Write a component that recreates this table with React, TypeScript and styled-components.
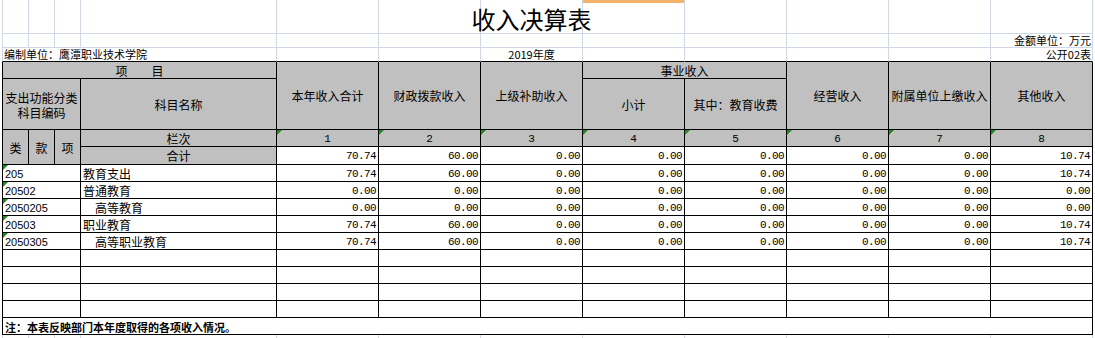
import React from "react";
import styled, { createGlobalStyle, css } from "styled-components";

const GRID = "#d0d7e5";
const LINE = "#000";
const HEAD = "#c0c0c0";
const CJK = `"Noto Sans CJK SC", "Liberation Sans", sans-serif`;
const MONO = `"Liberation Mono", monospace`;
const SANS = `"Liberation Sans", Arial, sans-serif`;

type Align = "left" | "center" | "right";
type CellProps = {
  $cols?: number;
  $rows?: number;
  $first?: boolean;
  $align?: Align;
  $mark?: boolean;
};

const justify: Record<Align, string> = { left: "flex-start", center: "center", right: "flex-end" };

const GlobalStyle = createGlobalStyle`
  html, body { margin: 0; padding: 0; background: #fff; }
  body { font-family: ${CJK}; color: #000; overflow: hidden; }
`;

const base = css<CellProps>`
  box-sizing: border-box;
  position: relative;
  display: flex;
  align-items: center;
  justify-content: ${(p) => justify[p.$align ?? "center"]};
  grid-column: span ${(p) => p.$cols ?? 1};
  grid-row: span ${(p) => p.$rows ?? 1};
  min-width: 0;
  white-space: nowrap;
`;

// little green "number stored as text" flag excel draws in the corner
const flag = css`
  &::before {
    content: "";
    position: absolute;
    top: 0;
    left: 0;
    border-top: 5px solid #1d8a1d;
    border-right: 5px solid transparent;
  }
`;

const Page = styled.div`
  height: 338px;
  padding-left: 2px;
`;

const Sheet = styled.div`
  display: grid;
  grid-template-columns: 27px 26px 26px 196px repeat(8, 102px);
  grid-template-rows: 34px 14px 14px 17px 51px 17px 18px repeat(10, 17px) 1fr;
  height: 100%;
`;

// plain worksheet cell outside the printed table
const Blank = styled.div<CellProps & { $edge?: boolean; $selected?: boolean }>`
  ${base};
  align-items: flex-end;
  padding: 0 1px;
  border-right: 1px solid ${GRID};
  border-bottom: 1px solid ${(p) => (p.$edge ? LINE : GRID)};
  border-left: ${(p) => (p.$first ? `1px solid ${GRID}` : "none")};
  ${(p) => p.$selected && css`box-shadow: inset 0 3px 0 #f6b36b;`}
  font-size: 11px;
  line-height: 13px;
`;

const Stub = styled.div<CellProps>`
  ${base};
  border-right: 1px solid ${GRID};
  border-left: ${(p) => (p.$first ? `1px solid ${GRID}` : "none")};
`;

const Title = styled.span`
  font-size: 24px;
  line-height: 26px;
  padding-bottom: 1px;
`;

const Head = styled.div<CellProps & { $mono?: boolean }>`
  ${base};
  background: ${HEAD};
  border-right: 1px solid ${LINE};
  border-bottom: 1px solid ${LINE};
  border-left: ${(p) => (p.$first ? `1px solid ${LINE}` : "none")};
  font-family: ${(p) => (p.$mono ? MONO : CJK)};
  font-size: ${(p) => (p.$mono ? 11 : 12)}px;
  line-height: 14px;
  padding-top: 1px;
  ${(p) => p.$mark && flag};
`;

const Label = styled.span`
  display: flex;
  flex-direction: column;
  align-items: center;
  line-height: 15px;
`;

type Kind = "num" | "code" | "text";

const Data = styled.div<CellProps & { $kind?: Kind; $indent?: boolean }>`
  ${base};
  background: #fff;
  border-right: 1px solid ${LINE};
  border-bottom: 1px solid ${LINE};
  border-left: ${(p) => (p.$first ? `1px solid ${LINE}` : "none")};
  justify-content: ${(p) => (p.$kind === "num" ? "flex-end" : "flex-start")};
  padding: 1px 2px 0 ${(p) => (p.$indent ? 14 : 2)}px;
  font-family: ${(p) => (p.$kind === "num" ? MONO : p.$kind === "code" ? SANS : CJK)};
  font-size: ${(p) => (p.$kind === "text" ? 12 : 11)}px;
  letter-spacing: ${(p) => (p.$kind === "num" ? "-0.6px" : "0")};
  line-height: 14px;
  ${(p) => p.$mark && flag};
`;

const Note = styled.div`
  ${base};
  grid-column: span 12;
  justify-content: flex-start;
  padding: 2px 0 0 2px;
  border: 1px solid ${LINE};
  border-top: none;
  font-size: 11px;
  font-weight: bold;
`;

const totals = ["70.74", "60.00", "0.00", "0.00", "0.00", "0.00", "0.00", "10.74"];
const zeros = Array(8).fill("0.00");

const items = [
  { code: "205", name: "教育支出", values: totals },
  { code: "20502", name: "普通教育", values: zeros },
  { code: "2050205", name: "高等教育", indent: true, values: zeros },
  { code: "20503", name: "职业教育", values: totals },
  { code: "2050305", name: "高等职业教育", indent: true, values: totals },
];

const cols = Array.from({ length: 12 }, (_, i) => i);
const numbers = Array.from({ length: 8 }, (_, i) => i + 1);

export default function App() {
  return (
    <Page>
      <GlobalStyle />
      <Sheet>
        {cols.map((i) => (
          <Blank key={"r1" + i} $first={i === 0} $selected={i === 7}>
            {i === 6 && <Title>收入决算表</Title>}
          </Blank>
        ))}
        {cols.map((i) => (
          <Blank key={"r2" + i} $first={i === 0} $align="right">
            {i === 11 && "金额单位：万元"}
          </Blank>
        ))}
        <Blank $first $cols={4} $edge $align="left">
          编制单位：鹰潭职业技术学院
        </Blank>
        {cols.slice(4).map((i) => (
          <Blank key={"r3" + i} $edge $align={i === 11 ? "right" : "center"}>
            {i === 6 && "2019年度"}
            {i === 11 && "公开02表"}
          </Blank>
        ))}

        <Head $first $cols={4}>项　　目</Head>
        <Head $rows={2}>本年收入合计</Head>
        <Head $rows={2}>财政拨款收入</Head>
        <Head $rows={2}>上级补助收入</Head>
        <Head $cols={2}>事业收入</Head>
        <Head $rows={2}>经营收入</Head>
        <Head $rows={2}>附属单位上缴收入</Head>
        <Head $rows={2}>其他收入</Head>

        <Head $first $cols={3}>
          <Label>
            <span>支出功能分类</span>
            <span>科目编码</span>
          </Label>
        </Head>
        <Head>科目名称</Head>
        <Head>小计</Head>
        <Head>其中：教育收费</Head>

        <Head $first $rows={2}>类</Head>
        <Head $rows={2}>款</Head>
        <Head $rows={2}>项</Head>
        <Head>栏次</Head>
        {numbers.map((n) => (
          <Head key={"n" + n} $mono $mark>
            {n}
          </Head>
        ))}

        <Head>合计</Head>
        {totals.map((v, i) => (
          <Data key={"t" + i} $kind="num">
            {v}
          </Data>
        ))}

        {items.map((row) => (
          <React.Fragment key={row.code}>
            <Data $first $cols={3} $kind="code" $mark>
              {row.code}
            </Data>
            <Data $kind="text" $indent={row.indent}>
              {row.name}
            </Data>
            {row.values.map((v, i) => (
              <Data key={i} $kind="num">
                {v}
              </Data>
            ))}
          </React.Fragment>
        ))}

        {[0, 1, 2, 3].map((r) => (
          <React.Fragment key={"e" + r}>
            <Data $first $cols={3} />
            <Data />
            {numbers.map((n) => (
              <Data key={n} />
            ))}
          </React.Fragment>
        ))}

        <Note>注：本表反映部门本年度取得的各项收入情况。</Note>

        {cols.map((i) => (
          <Stub key={"s" + i} $first={i === 0} />
        ))}
      </Sheet>
    </Page>
  );
}
